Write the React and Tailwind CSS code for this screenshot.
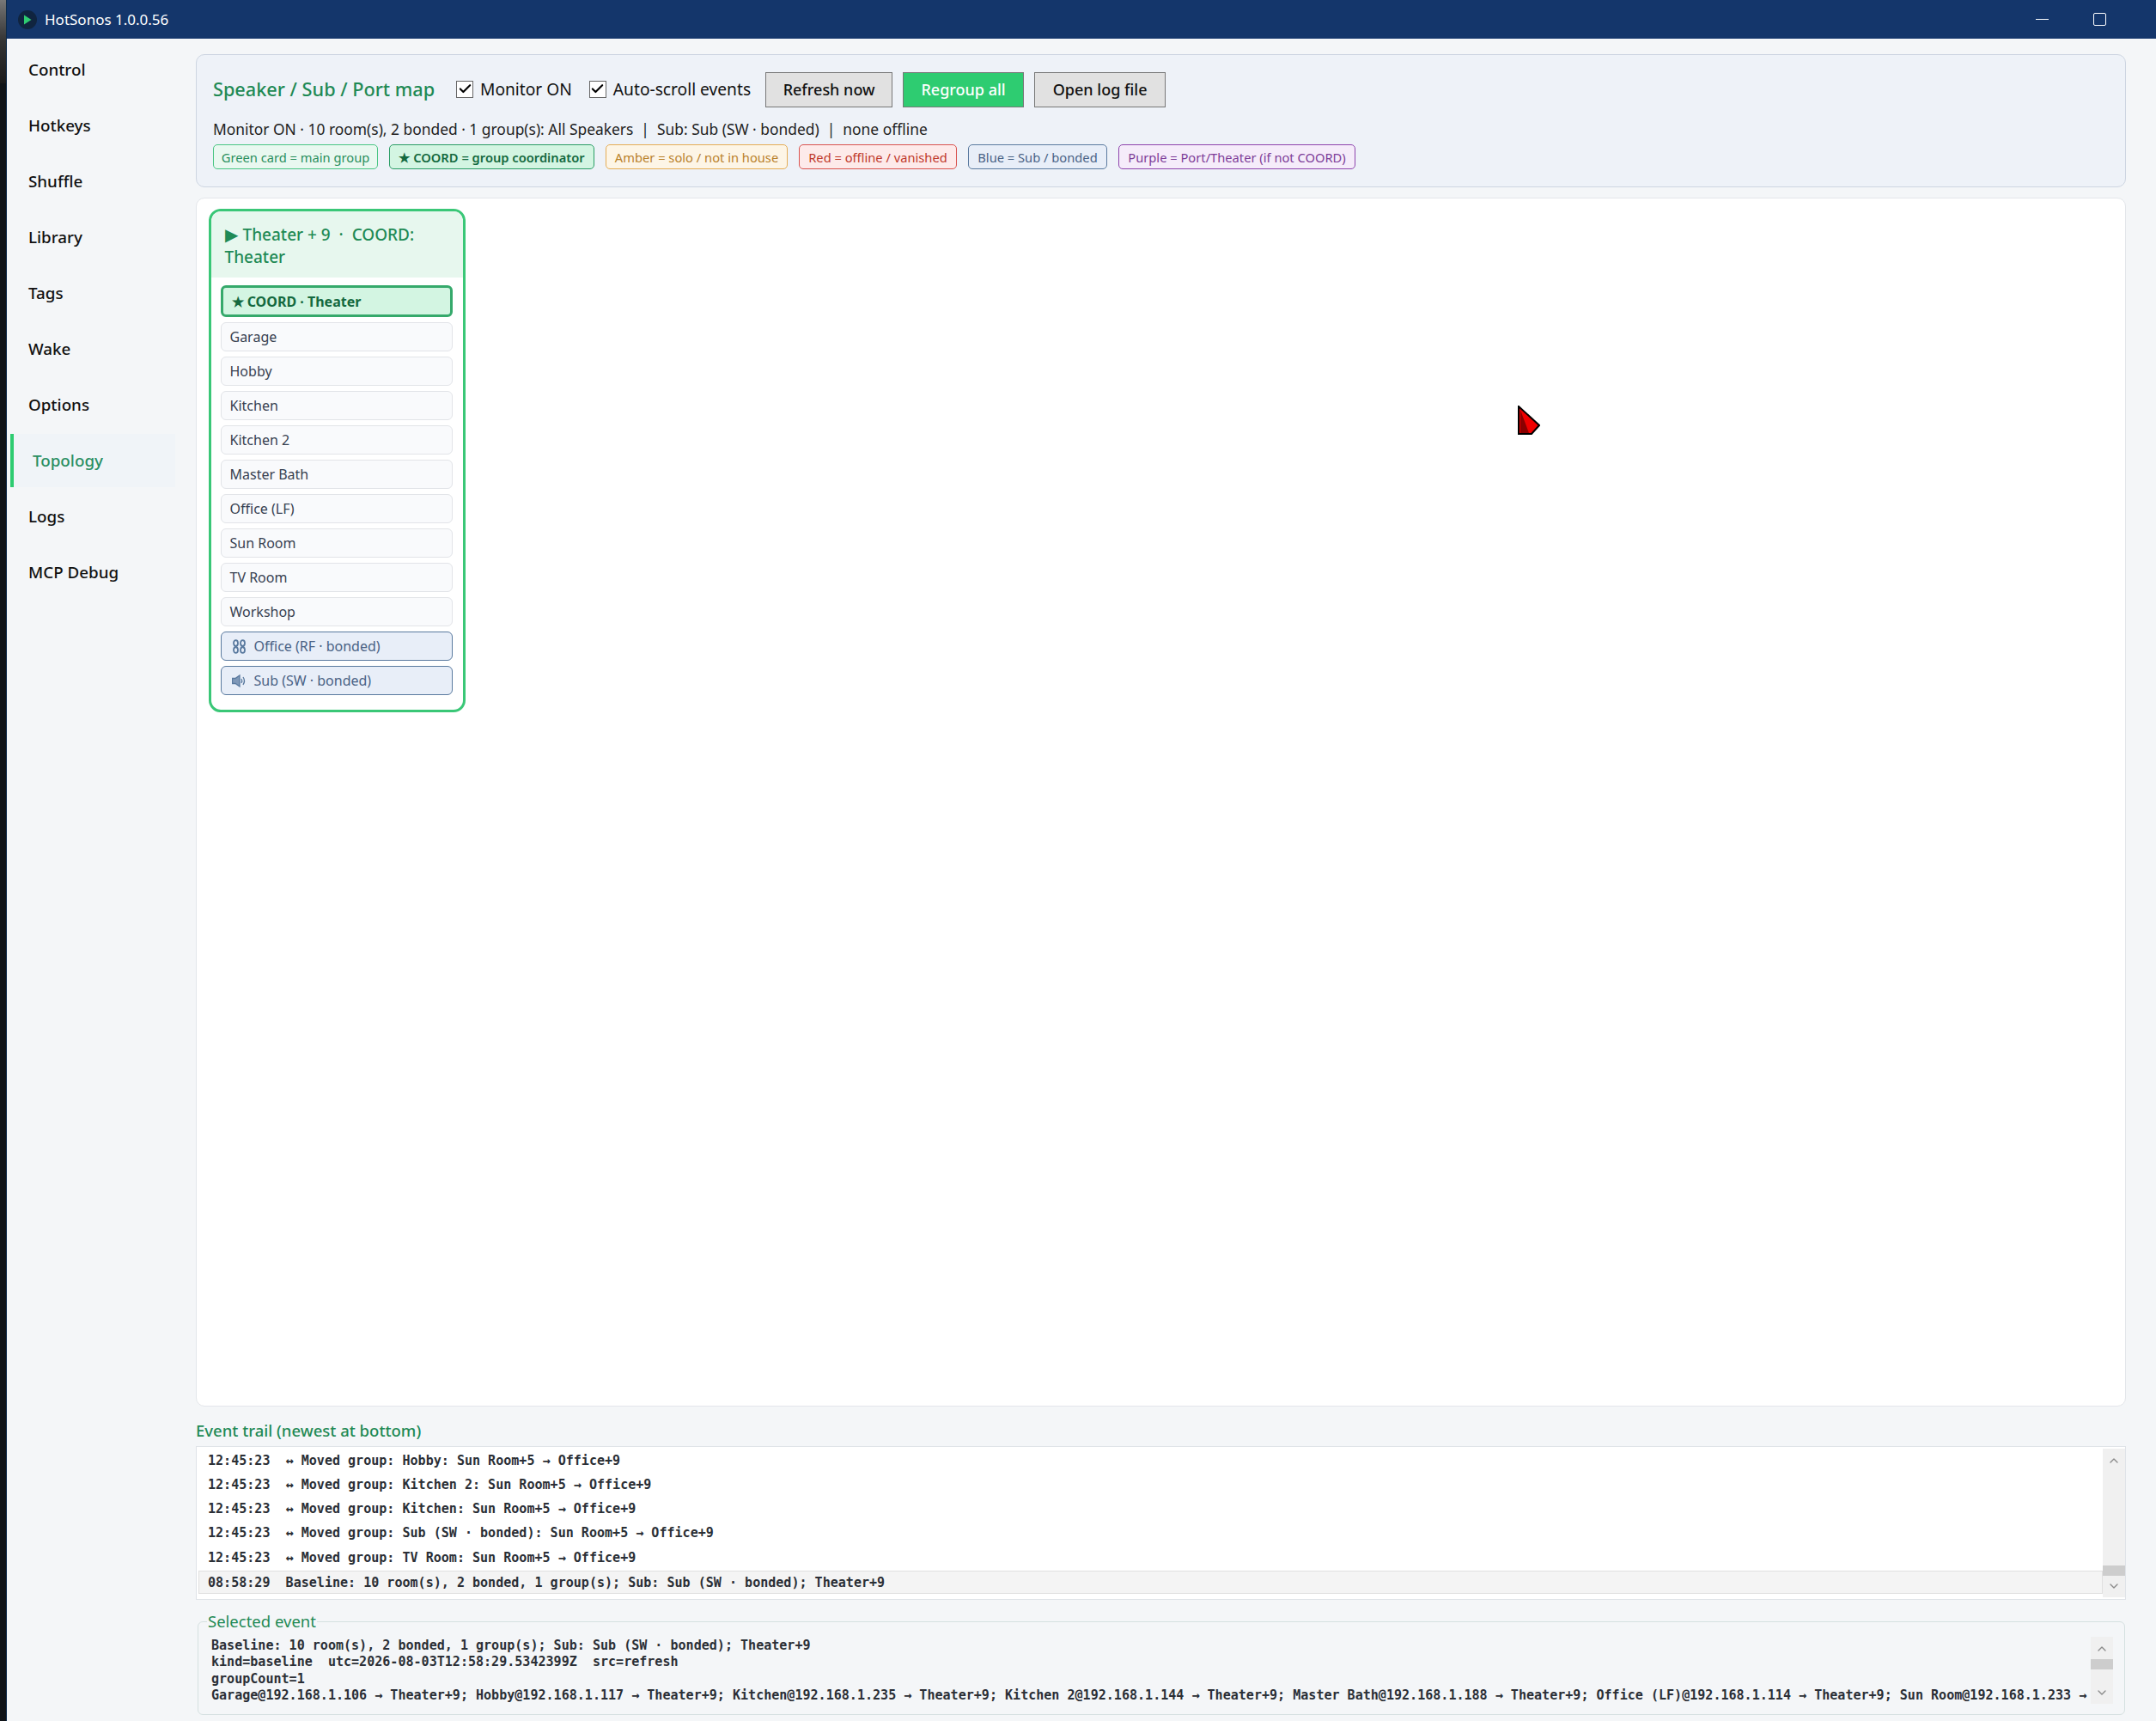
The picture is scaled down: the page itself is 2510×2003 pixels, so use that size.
import { Check, ChevronUp, ChevronDown } from "lucide-react";

const navItems = ["Control", "Hotkeys", "Shuffle", "Library", "Tags", "Wake", "Options", "Topology", "Logs", "MCP Debug"];

const rooms = ["Garage", "Hobby", "Kitchen", "Kitchen 2", "Master Bath", "Office (LF)", "Sun Room", "TV Room", "Workshop"];

const events = [
    "12:45:23  ↔ Moved group: Hobby: Sun Room+5 → Office+9",
    "12:45:23  ↔ Moved group: Kitchen 2: Sun Room+5 → Office+9",
    "12:45:23  ↔ Moved group: Kitchen: Sun Room+5 → Office+9",
    "12:45:23  ↔ Moved group: Sub (SW · bonded): Sun Room+5 → Office+9",
    "12:45:23  ↔ Moved group: TV Room: Sun Room+5 → Office+9",
];

function Checkbox({ label }) {
    return (
        <label className="flex items-center gap-[8px] text-[19.2px] text-[#111]">
            <span className="flex h-[20px] w-[20px] items-center justify-center border border-[#666] bg-white">
                <Check size={17} strokeWidth={3} className="text-black" />
            </span>
            {label}
        </label>
    );
}

function Legend({ className, children }) {
    return <span className={`flex h-[29px] items-center justify-center rounded-[5px] border-[1.5px] text-[14.7px] ${className}`}>{children}</span>;
}

function Scrollbar({ className, thumbClassName }) {
    return (
        <div className={`flex w-[26px] shrink-0 flex-col items-center bg-[#f0f0f0] ${className}`}>
            <ChevronUp size={16} className="mt-[6px] text-[#8a8a8a]" />
            <div className={`w-full bg-[#cdcdcd] ${thumbClassName}`} />
            <ChevronDown size={16} className="text-[#8a8a8a]" />
        </div>
    );
}

function Room({ children }) {
    return (
        <div className="flex h-[34px] items-center rounded-[6px] border border-[#e2e4e8] bg-[#f9fafc] px-[10px] text-[16px] text-[#374151]">
            {children}
        </div>
    );
}

function BondedRoom({ icon, children }) {
    return (
        <div className="flex h-[34px] items-center gap-[9px] rounded-[6px] border-[1.5px] border-[#5a7a9f] bg-[#e8eef8] px-[12px] text-[16px] text-[#4a6285]">
            <span className="flex w-[17px] justify-center">{icon}</span>
            {children}
        </div>
    );
}

export default function App() {
    return (
        <div className="relative flex h-[2003px] w-[2510px] overflow-hidden bg-[#f4f6f8] font-['Noto_Sans',sans-serif]">
            <div className="w-[8px] shrink-0 border-r border-[#0d2a4a] bg-[#101418]">
                <div className="h-[97px] bg-linear-to-b from-[#777] via-[#333] to-[#1a1a1a]" />
            </div>
            <div className="flex min-w-0 flex-1 flex-col">
                {/* Title bar */}
                <header className="flex h-[45px] shrink-0 items-center bg-[#14366b] pl-[13px] text-white">
                    <span className="flex h-[22px] w-[22px] items-center justify-center rounded-full bg-[#10243f]">
                        <svg width="10" height="12" viewBox="0 0 10 12"><path d="M1 0.5 L9.5 6 L1 11.5 Z" fill="#2ecc71" /></svg>
                    </span>
                    <span className="ml-[9px] text-[17px]">HotSonos 1.0.0.56</span>
                    <div className="ml-auto flex items-center">
                        <span className="h-px w-[15px] bg-white" />
                        <span className="mr-[58px] ml-[52px] h-[15px] w-[15px] rounded-[2px] border-[1.5px] border-white" />
                    </div>
                </header>

                <div className="flex min-h-0 flex-1">
                    {/* Sidebar */}
                    <nav className="flex w-[220px] shrink-0 flex-col pt-[5px] pl-[4px]">
                        {navItems.map((item) =>
                            item === "Topology" ? (
                                <div key={item} className="mb-[3px] flex h-[62px] w-[192px] items-center border-l-[4px] border-[#2ecc71] bg-[#f0f4f8] pl-[22px] text-[18.8px] font-medium text-[#2a8f63]">
                                    {item}
                                </div>
                            ) : (
                                <div key={item} className="mb-[3px] flex h-[62px] w-[192px] items-center pl-[21px] text-[18.8px] font-medium text-[#111]">
                                    {item}
                                </div>
                            )
                        )}
                    </nav>

                    {/* Main column */}
                    <main className="flex w-[2247px] shrink-0 flex-col pt-[18px]">
                        <section className="h-[155px] shrink-0 rounded-[10px] border-[1.5px] border-[#cdd5e1] bg-[#eef2f8] px-[19px] pt-[19px]">
                            <div className="flex h-[42px] items-center">
                                <h1 className="w-[283px] text-[21.7px] font-medium text-[#1f8a55]">Speaker / Sub / Port map</h1>
                                <Checkbox label="Monitor ON" />
                                <div className="w-[20px]" />
                                <Checkbox label="Auto-scroll events" />
                                <div className="ml-[17px] flex gap-[12px]">
                                    <button className="h-[41px] w-[148px] border border-[#777] bg-[#e1e1e1] text-[18px] font-medium text-[#111]">Refresh now</button>
                                    <button className="h-[41px] w-[141px] border border-[#777] bg-[#2ecc71] text-[18px] font-medium text-white">Regroup all</button>
                                    <button className="h-[41px] w-[153px] border border-[#777] bg-[#e1e1e1] text-[18px] font-medium text-[#111]">Open log file</button>
                                </div>
                            </div>
                            <p className="mt-[12px] text-[17.4px] text-[#222]">Monitor ON · 10 room(s), 2 bonded · 1 group(s): All Speakers&nbsp; |&nbsp; Sub: Sub (SW · bonded)&nbsp; |&nbsp; none offline</p>
                            <div className="mt-[5px] flex gap-[13px]">
                                <Legend className="w-[192px] border-[#49c583] bg-[#e9f8f0] text-[#2a8f5d]">Green card = main group</Legend>
                                <Legend className="w-[239px] border-[#2a9d65] bg-[#d3f5e2] font-semibold text-[#14693f]">★ COORD = group coordinator</Legend>
                                <Legend className="w-[212px] border-[#e5ad55] bg-[#fdf5e6] text-[#b9812a]">Amber = solo / not in house</Legend>
                                <Legend className="w-[184px] border-[#d9534f] bg-[#fdeaea] text-[#c0392b]">Red = offline / vanished</Legend>
                                <Legend className="w-[162px] border-[#5a7a9f] bg-[#e8eef8] text-[#4a6285]">Blue = Sub / bonded</Legend>
                                <Legend className="w-[276px] border-[#8e44ad] bg-[#f5ecfa] text-[#7d3c98]">Purple = Port/Theater (if not COORD)</Legend>
                            </div>
                        </section>

                        <section className="mt-[12px] h-[1407px] shrink-0 rounded-[10px] border-[1.5px] border-[#e3e6ea] bg-white pt-[12px] pl-[13.5px]">
                            <div className="h-[586px] w-[299px] overflow-hidden rounded-[14px] border-[3px] border-[#3ac777] bg-white">
                                <div className="h-[77px] bg-[#e7f7ee] px-[16px] pt-[14px] text-[19px] leading-[26px] font-medium text-[#1f8a55]">
                                    <span className="inline-block w-[21px] text-[20px] leading-none">▶</span>Theater + 9 &nbsp;·&nbsp; COORD: Theater
                                </div>
                                <div className="flex flex-col gap-[6px] pt-[9px] pr-[12px] pl-[11px]">
                                    <div className="flex h-[37px] items-center rounded-[6px] border-[3px] border-[#35a96b] bg-[#d3f5e2] px-[10px] text-[16px] font-bold text-[#14693f]">
                                        ★ COORD · Theater
                                    </div>
                                    {rooms.map((room) => (
                                        <Room key={room}>{room}</Room>
                                    ))}
                                    <BondedRoom icon={
                                        <svg width="15" height="17" viewBox="0 0 15 17" fill="none" stroke="#5a7a9f" strokeWidth="1.8">
                                            <ellipse cx="3.5" cy="4.5" rx="2.5" ry="3.4" />
                                            <ellipse cx="3.5" cy="12.5" rx="2.5" ry="3.4" />
                                            <ellipse cx="11.5" cy="4.5" rx="2.5" ry="3.4" />
                                            <ellipse cx="11.5" cy="12.5" rx="2.5" ry="3.4" />
                                            <path d="M1.5 7 L5.5 10 M5.5 7 L1.5 10 M9.5 7 L13.5 10 M13.5 7 L9.5 10" />
                                        </svg>
                                    }>
                                        Office (RF · bonded)
                                    </BondedRoom>
                                    <BondedRoom icon={
                                        <svg width="17" height="15" viewBox="0 0 17 15" fill="none" stroke="#5a7a9f" strokeWidth="1.3">
                                            <path d="M0.5 4.5 H4 L9 1 V14 L4 10.5 H0.5 Z" fill="#7f98b8" />
                                            <path d="M11 5 Q12.5 7.5 11 10 M13 3 Q16 7.5 13 12" />
                                        </svg>
                                    }>
                                        Sub (SW · bonded)
                                    </BondedRoom>
                                </div>
                            </div>
                        </section>

                        <h2 className="mt-[14px] h-[32px] text-[18.5px] font-medium text-[#1f8a55]">Event trail (newest at bottom)</h2>

                        <section className="flex h-[179px] w-[2247px] shrink-0 border-[1.5px] border-[#dfe3e8] bg-white pt-[2px] pb-[2px] pl-[2px] font-['DejaVu_Sans_Mono',monospace] text-[15.05px] font-bold text-[#2b2f36]">
                            <div className="flex min-w-0 flex-1 flex-col">
                                <div className="flex h-[142px] flex-col">
                                    {events.map((line, i) => (
                                        <div key={i} className="flex h-[28.2px] items-center pl-[11px] whitespace-pre">{line}</div>
                                    ))}
                                </div>
                                <div className="flex h-[27px] items-center border-[1.5px] border-[#e0e0e0] bg-[#f4f4f4] pt-[1px] pl-[10px] whitespace-pre">
                                    08:58:29  Baseline: 10 room(s), 2 bonded, 1 group(s); Sub: Sub (SW · bonded); Theater+9
                                </div>
                            </div>
                            <Scrollbar className="h-full" thumbClassName="mt-[114px] mb-[4px] h-[12px]" />
                        </section>

                        <fieldset className="mt-[15px] ml-[2px] h-[119px] w-[2243px] rounded-[6px] border-[1.5px] border-[#d5e0e0] pr-[13px] pl-[15px]">
                            <legend className="ml-[-5px] px-[1px] text-[18.5px] leading-[20px] text-[#1f8a55]">Selected event</legend>
                            <div className="flex items-start">
                                <div className="w-[2188px] pt-[9px] font-['DejaVu_Sans_Mono',monospace] text-[15.05px] leading-[19.3px] font-bold whitespace-pre text-[#2b2f36]">
                                    <div>Baseline: 10 room(s), 2 bonded, 1 group(s); Sub: Sub (SW · bonded); Theater+9</div>
                                    <div>kind=baseline  utc=2026-08-03T12:58:29.5342399Z  src=refresh</div>
                                    <div>groupCount=1</div>
                                    <div>Garage@192.168.1.106 → Theater+9; Hobby@192.168.1.117 → Theater+9; Kitchen@192.168.1.235 → Theater+9; Kitchen 2@192.168.1.144 → Theater+9; Master Bath@192.168.1.188 → Theater+9; Office (LF)@192.168.1.114 → Theater+9; Sun Room@192.168.1.233 →</div>
                                </div>
                                <Scrollbar className="mt-[8px] h-[78px]" thumbClassName="mt-[4px] mb-[19px] h-[12px]" />
                            </div>
                        </fieldset>
                    </main>
                </div>
            </div>

            {/* stray red cursor captured over the canvas */}
            <svg className="absolute top-[472px] left-[1767px]" width="26" height="35" viewBox="0 0 26 35">
                <path d="M1 1 L25 23 L16 33 L1 33 Z" fill="#f00000" stroke="#000" strokeWidth="2" />
                <path d="M3 5 L13 32 L3 32 Z" fill="#8a0000" />
            </svg>
        </div>
    );
}
